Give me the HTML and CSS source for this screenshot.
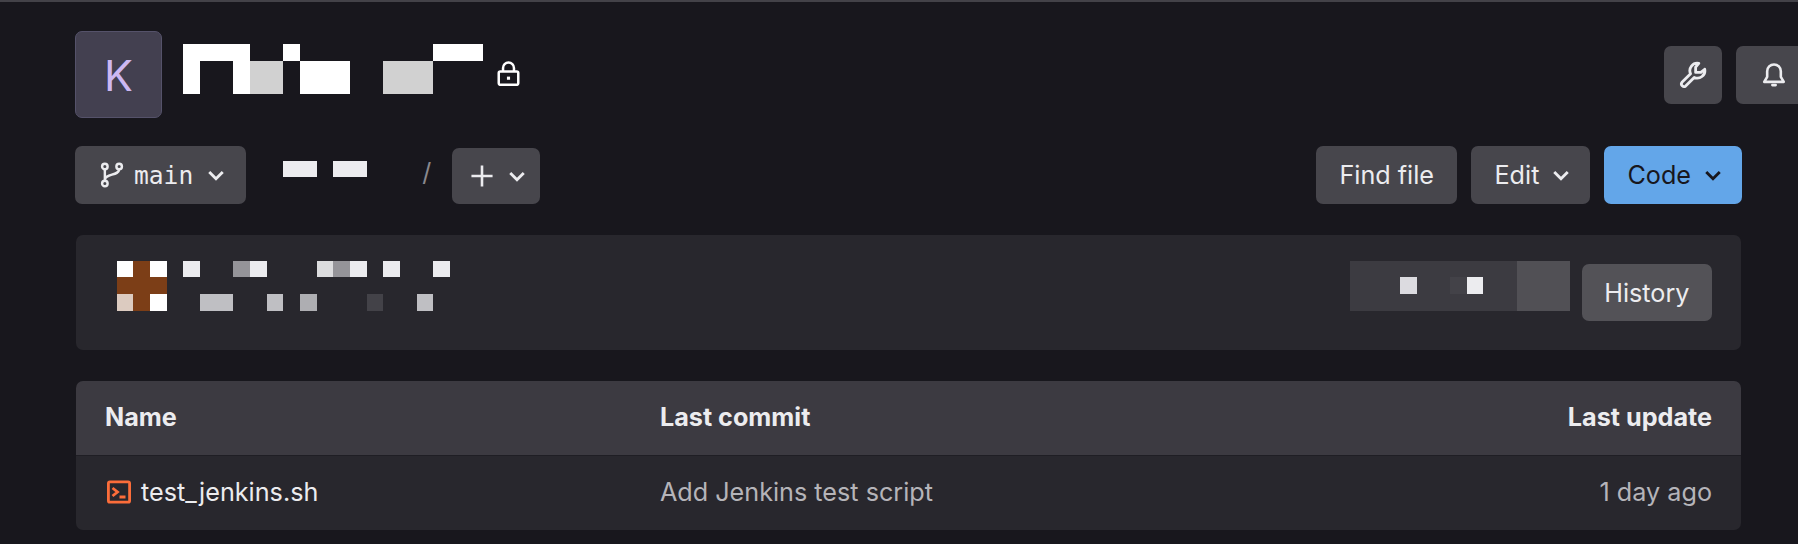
FILE: index.html
```html
<!DOCTYPE html>
<html lang="en">
<head>
  <meta charset="UTF-8">
  <meta name="viewport" content="width=device-width, initial-scale=1.0">
  <title>Repository</title>
  <link rel="stylesheet" href="styles.css">
</head>
<body>
  <main class="page">
    <!-- Project header -->
    <header class="repo-header">
      <div class="avatar">K</div>
      <svg class="mosaic repo-name" width="300" height="50" viewBox="0 0 300 50">
        <rect x="0" y="0" width="67" height="17" fill="#fff"/>
        <rect x="100" y="0" width="17" height="17" fill="#fff"/>
        <rect x="250" y="0" width="50" height="17" fill="#fff"/>
        <rect x="0" y="17" width="17" height="33" fill="#fff"/>
        <rect x="50" y="17" width="17" height="33" fill="#fff"/>
        <rect x="67" y="17" width="33" height="33" fill="#d1d1d1"/>
        <rect x="117" y="17" width="50" height="33" fill="#fff"/>
        <rect x="200" y="17" width="50" height="33" fill="#d1d1d1"/>
      </svg>
      <svg class="icon lock" width="25" height="25" viewBox="0 0 16 16" fill="none" stroke="#fff" stroke-width="1.6">
        <rect x="1.75" y="6.75" width="12.5" height="8.5" rx="1"/>
        <path d="M4.5 6.75V4.5a3.5 3.5 0 0 1 7 0v2.25"/>
        <rect x="7" y="10" width="2" height="2" fill="#fff" stroke="none"/>
      </svg>
      <div class="repo-actions">
        <button class="btn btn-square">
          <svg class="icon" width="28" height="28" viewBox="0 0 16 16" fill="none" stroke="#ececef" stroke-width="1.6" stroke-linejoin="round">
            <path d="M11.3 1.3A4.3 4.3 0 0 0 6.6 7.3l-4.9 4.9a1.5 1.5 0 0 0 2.1 2.1l4.9-4.9a4.3 4.3 0 0 0 6-4.7l-2.2 1.8h-3v-3z"/>
          </svg>
        </button>
        <button class="btn btn-bell">
          <svg class="icon" width="26" height="26" viewBox="0 0 16 16" fill="none" stroke="#ececef" stroke-width="1.6" stroke-linejoin="round">
            <path d="M8 1.5a4.2 4.2 0 0 0-4.2 4.2v3.4L2 12.2h12l-1.8-3.1V5.7A4.2 4.2 0 0 0 8 1.5z"/>
            <path d="M7 14.2h2" stroke-linecap="round"/>
          </svg>
        </button>
      </div>
    </header>

    <!-- Branch and path toolbar -->
    <div class="toolbar">
      <button class="btn btn-branch">
        <svg class="icon" width="26" height="26" viewBox="0 0 16 16" fill="none" stroke="#ececef" stroke-width="1.5">
          <circle cx="3.6" cy="2.8" r="1.7"/>
          <circle cx="12.4" cy="2.8" r="1.7"/>
          <circle cx="3.6" cy="13.2" r="1.7"/>
          <path d="M3.6 4.5v7M12.4 4.5c0 4-8.8 2.6-8.8 6.5"/>
        </svg>
        <span class="mono">main</span>
        <svg class="chevron" width="24" height="24" viewBox="0 0 16 16" fill="none" stroke="#ececef" stroke-width="1.9"><path d="M3.5 6l4.5 4.5L12.5 6"/></svg>
      </button>
      <svg class="mosaic path-blocks" width="84" height="16" viewBox="0 0 84 16">
        <rect x="0" y="0" width="34" height="16" fill="#ececef"/>
        <rect x="50" y="0" width="34" height="16" fill="#ececef"/>
      </svg>
      <span class="slash">/</span>
      <button class="btn btn-plus">
        <svg class="icon" width="26" height="26" viewBox="0 0 16 16" fill="none" stroke="#ececef" stroke-width="1.6"><path d="M8 1.5v13M1.5 8h13"/></svg>
        <svg class="chevron" width="24" height="24" viewBox="0 0 16 16" fill="none" stroke="#ececef" stroke-width="1.9"><path d="M3.5 6l4.5 4.5L12.5 6"/></svg>
      </button>
      <div class="toolbar-right">
        <button class="btn btn-find">Find file</button>
        <button class="btn btn-caret">Edit
          <svg class="chevron" width="24" height="24" viewBox="0 0 16 16" fill="none" stroke="#ececef" stroke-width="1.9"><path d="M3.5 6l4.5 4.5L12.5 6"/></svg>
        </button>
        <button class="btn btn-caret btn-primary">Code
          <svg class="chevron" width="24" height="24" viewBox="0 0 16 16" fill="none" stroke="#18171d" stroke-width="1.9"><path d="M3.5 6l4.5 4.5L12.5 6"/></svg>
        </button>
      </div>
    </div>

    <!-- Last commit -->
    <section class="commit">
      <svg class="mosaic" width="333" height="50" viewBox="0 0 333 50">
        <rect x="0" y="0" width="50" height="50" fill="#7c3e17"/>
        <rect x="0" y="0" width="16" height="16" fill="#fff"/>
        <rect x="33" y="0" width="17" height="16" fill="#fff"/>
        <rect x="0" y="33" width="16" height="17" fill="#dccbc0"/>
        <rect x="33" y="33" width="17" height="17" fill="#fff"/>
        <rect x="66" y="0" width="17" height="16" fill="#ececef"/>
        <rect x="116" y="0" width="17" height="16" fill="#959499"/>
        <rect x="133" y="0" width="17" height="16" fill="#ececef"/>
        <rect x="200" y="0" width="16" height="16" fill="#dcdcde"/>
        <rect x="216" y="0" width="17" height="16" fill="#959499"/>
        <rect x="233" y="0" width="17" height="16" fill="#ececef"/>
        <rect x="266" y="0" width="17" height="16" fill="#ececef"/>
        <rect x="316" y="0" width="17" height="16" fill="#ececef"/>
        <rect x="83" y="33" width="33" height="17" fill="#bfbfc3"/>
        <rect x="150" y="33" width="16" height="17" fill="#bfbfc3"/>
        <rect x="183" y="33" width="17" height="17" fill="#aeaeb2"/>
        <rect x="250" y="33" width="16" height="17" fill="#434248"/>
        <rect x="300" y="33" width="16" height="17" fill="#bfbfc3"/>
      </svg>
      <svg class="mosaic commit-sha" width="220" height="50" viewBox="0 0 220 50">
        <rect x="0" y="0" width="167" height="50" fill="#3c3b41"/>
        <rect x="167" y="0" width="53" height="50" fill="#515055"/>
        <rect x="50" y="16" width="17" height="17" fill="#dcdbe0"/>
        <rect x="100" y="16" width="17" height="17" fill="#434248"/>
        <rect x="117" y="16" width="16" height="17" fill="#ececef"/>
      </svg>
      <button class="btn btn-history">History</button>
    </section>

    <!-- File list -->
    <table class="files">
      <thead>
        <tr>
          <th class="col-name">Name</th>
          <th class="col-commit">Last commit</th>
          <th class="col-update">Last update</th>
        </tr>
      </thead>
      <tbody>
        <tr>
          <td>
            <span class="file-name">
              <svg class="icon" width="24" height="24" viewBox="0 0 24 24" fill="none" stroke="#fc6d3a" stroke-width="2.8">
                <rect x="1.4" y="1.8" width="21.2" height="20.4" rx="1.5"/>
                <path d="M5.5 8l5 4-5 4M12.5 17h6"/>
              </svg>
              test_jenkins.sh
            </span>
          </td>
          <td class="muted">Add Jenkins test script</td>
          <td class="muted col-update">1 day ago</td>
        </tr>
      </tbody>
    </table>
  </main>
</body>
</html>
```
FILE: styles.css
```css
/* General Styling */
html, body {
  overflow: hidden;
}

body {
  margin: 0;
  height: 542px;
  border-top: 2px solid #434248;
  background: #18171d;
  color: #ececef;
  font-family: 'Inter', sans-serif;
  font-size: 25.2px;
}

.page {
  padding: 29px 57px 0 76px;
}

svg {
  display: block;
  flex-shrink: 0;
}

/* Project header */
.repo-header {
  display: flex;
  align-items: flex-start;
  height: 87px;
  margin-left: -1px;
}

.avatar {
  display: flex;
  align-items: center;
  justify-content: center;
  box-sizing: border-box;
  width: 87px;
  height: 87px;
  margin-right: 21px;
  background: #434050;
  border: 1px solid #55526a;
  border-radius: 7px;
  color: #cdb8f2;
  font-size: 43px;
}

.repo-name {
  margin-top: 13px;
}

.lock {
  margin: 30px 0 0 13px;
}

.repo-actions {
  display: flex;
  gap: 14px;
  margin-top: 15px;
  margin-left: auto;
  margin-right: -115px;
}

/* Buttons */
.btn {
  display: inline-flex;
  align-items: center;
  justify-content: center;
  height: 58px;
  padding: 0 23px;
  border: none;
  border-radius: 7px;
  background: #47464c;
  color: #ececef;
  font-family: inherit;
  font-size: inherit;
}

.btn-square {
  width: 58px;
  padding: 0;
}

.btn-bell {
  width: 120px;
  justify-content: flex-start;
  padding: 0 0 0 25px;
}

.btn-branch {
  gap: 9px;
  padding: 0 18px 0 24px;
}

.btn-plus {
  gap: 10px;
  height: 56px;
  margin-top: 2px;
  padding: 0 11px 0 17px;
}

.btn-find {
  padding: 0 23.5px;
}

.btn-caret {
  padding-right: 17px;
}

.btn-primary {
  background: #63a6e9;
  color: #18171d;
}

.btn-history {
  height: 57px;
  margin: 3px 29px 0 12px;
  padding: 0 22.5px;
  background: #535257;
}

.chevron {
  margin-left: 10px;
}

.btn-plus .chevron {
  margin-left: 0;
}

.btn-branch .chevron {
  margin-left: 2px;
}

.mono {
  font-family: 'DejaVu Sans Mono', monospace;
  font-size: 24.6px;
}

/* Toolbar */
.toolbar {
  display: flex;
  align-items: flex-start;
  margin-top: 28px;
  margin-left: -1px;
}

.path-blocks {
  margin: 15px 0 0 37px;
}

.slash {
  margin: 11px 21px 0 55px;
  color: #89888d;
}

.toolbar-right {
  display: flex;
  gap: 14px;
  margin-left: auto;
  margin-right: -1px;
}

/* Last commit */
.commit {
  display: flex;
  align-items: flex-start;
  height: 115px;
  margin-top: 31px;
  background: #28272d;
  border-radius: 7px;
}

.commit > .mosaic:first-child {
  margin: 26px 0 0 41px;
}

.commit-sha {
  margin: 26px 0 0 auto;
}

.commit .btn {
  margin-top: 29px;
}

/* File list */
.files {
  width: 100%;
  margin-top: 31px;
  border-collapse: separate;
  border-spacing: 0;
  table-layout: fixed;
}

.files th,
.files td {
  box-sizing: border-box;
  height: 74px;
  padding: 0 29px;
}

.files th {
  height: 75px;
  padding-bottom: 2px;
  background: #3c3a41;
  border-bottom: 1px solid #1f1e24;
  font-weight: 700;
  text-align: left;
}

.files td {
  padding-bottom: 2px;
  background: #28272d;
}

.files th:first-child { border-top-left-radius: 7px; }
.files th:last-child { border-top-right-radius: 7px; }
.files tr td:first-child { border-bottom-left-radius: 7px; }
.files tr td:last-child { border-bottom-right-radius: 7px; }

.col-name {
  width: 33.33%;
}

.col-update {
  width: 25%;
}

.files .col-update {
  text-align: right;
}

.file-name {
  display: flex;
  align-items: center;
  gap: 10px;
  margin-left: 2px;
}

.muted {
  color: #b5b4b9;
}
```
